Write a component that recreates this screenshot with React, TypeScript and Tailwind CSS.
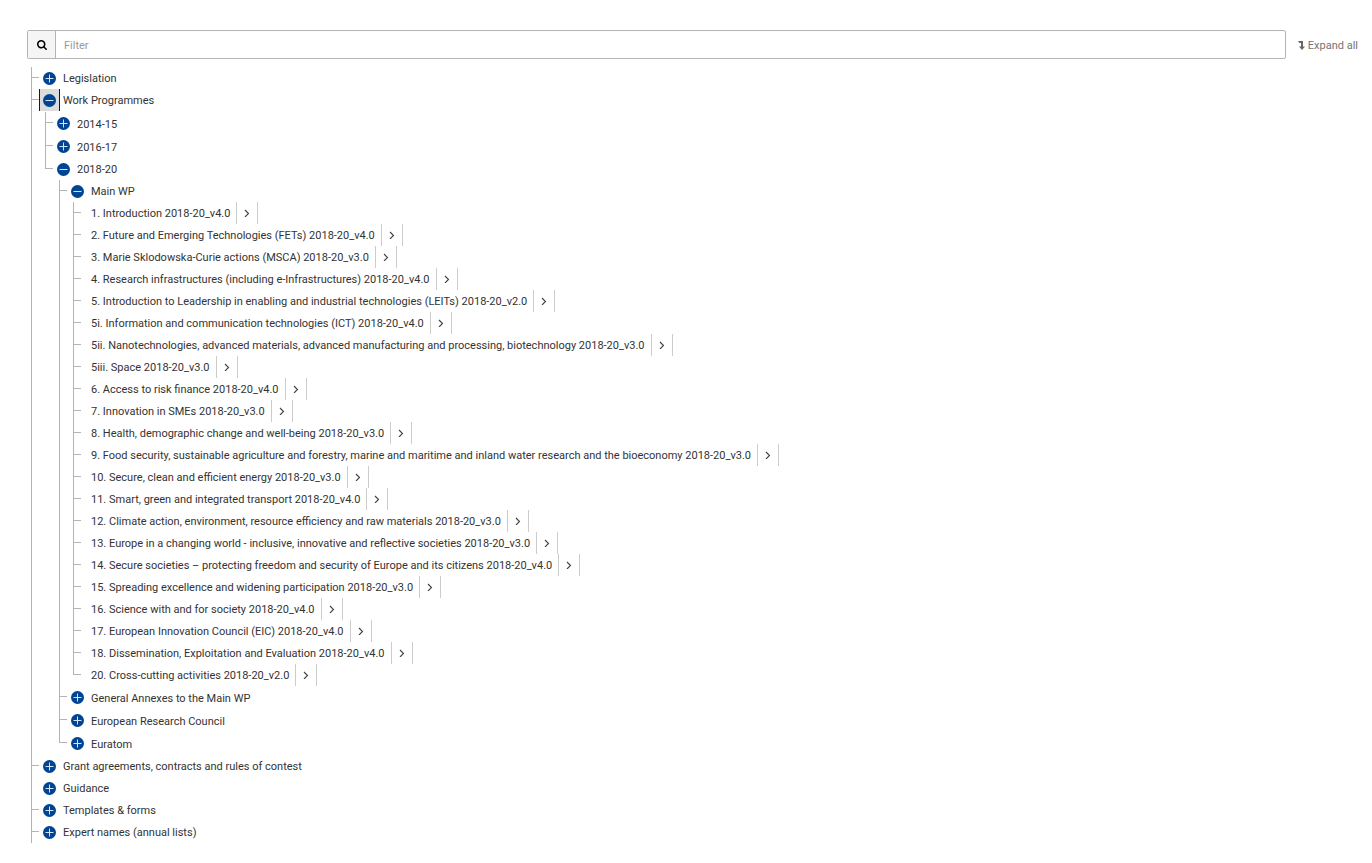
import React, { useState } from 'react';
import { clsx } from 'clsx';

interface TreeNode {
  label: string;
  children?: TreeNode[];
  leaf?: boolean;
  noTick?: boolean;
}

const mainWp = [
  '1. Introduction 2018-20_v4.0',
  '2. Future and Emerging Technologies (FETs) 2018-20_v4.0',
  '3. Marie Sklodowska-Curie actions (MSCA) 2018-20_v3.0',
  '4. Research infrastructures (including e-Infrastructures) 2018-20_v4.0',
  '5. Introduction to Leadership in enabling and industrial technologies (LEITs) 2018-20_v2.0',
  '5i. Information and communication technologies (ICT) 2018-20_v4.0',
  '5ii. Nanotechnologies, advanced materials, advanced manufacturing and processing, biotechnology 2018-20_v3.0',
  '5iii. Space 2018-20_v3.0',
  '6. Access to risk finance 2018-20_v4.0',
  '7. Innovation in SMEs 2018-20_v3.0',
  '8. Health, demographic change and well-being 2018-20_v3.0',
  '9. Food security, sustainable agriculture and forestry, marine and maritime and inland water research and the bioeconomy 2018-20_v3.0',
  '10. Secure, clean and efficient energy 2018-20_v3.0',
  '11. Smart, green and integrated transport 2018-20_v4.0',
  '12. Climate action, environment, resource efficiency and raw materials 2018-20_v3.0',
  '13. Europe in a changing world - inclusive, innovative and reflective societies 2018-20_v3.0',
  '14. Secure societies – protecting freedom and security of Europe and its citizens 2018-20_v4.0',
  '15. Spreading excellence and widening participation 2018-20_v3.0',
  '16. Science with and for society 2018-20_v4.0',
  '17. European Innovation Council (EIC) 2018-20_v4.0',
  '18. Dissemination, Exploitation and Evaluation 2018-20_v4.0',
  '20. Cross-cutting activities 2018-20_v2.0',
];

const tree: TreeNode[] = [
  { label: 'Legislation' },
  {
    label: 'Work Programmes',
    children: [
      { label: '2014-15' },
      { label: '2016-17' },
      {
        label: '2018-20',
        children: [
          { label: 'Main WP', children: mainWp.map((label) => ({ label, leaf: true })) },
          { label: 'General Annexes to the Main WP' },
          { label: 'European Research Council' },
          { label: 'Euratom' },
        ],
      },
    ],
  },
  { label: 'Grant agreements, contracts and rules of contest' },
  { label: 'Guidance', noTick: true },
  { label: 'Templates & forms' },
  { label: 'Expert names (annual lists)' },
];

const ToggleIcon: React.FC<{ open: boolean }> = ({ open }) => (
  <svg viewBox="0 0 13 13" className="size-[13px]" aria-hidden="true">
    <circle cx="6.5" cy="6.5" r="6.5" fill="#004494" />
    <path d={open ? 'M2.5 6.5h8' : 'M2.5 6.5h8M6.5 2.5v8'} stroke="#d9e3ef" strokeWidth="1" />
  </svg>
);

const LeafRow: React.FC<{ label: string }> = ({ label }) => (
  <div className="flex h-[22px] items-center pl-[18px]">
    <span className="pt-0.5 whitespace-nowrap">{label}</span>
    <button
      type="button"
      aria-label={`Open ${label}`}
      className="ml-[6px] flex h-[22px] w-[22px] shrink-0 items-center justify-center border-x border-[#ccc]"
    >
      <svg viewBox="0 0 6 8" className="h-2 w-[6px]" aria-hidden="true">
        <path d="M1 1 4.5 4.5 1 8" fill="none" stroke="#404040" strokeWidth="1.1" />
      </svg>
    </button>
  </div>
);

interface FolderRowProps {
  label: string;
  root?: boolean;
  open: boolean;
  focused: boolean;
  onToggle: () => void;
}

const FolderRow: React.FC<FolderRowProps> = ({ label, root, open, focused, onToggle }) => (
  <div className={clsx('flex items-center pl-2', root || open ? 'h-[22px]' : 'h-[23px]')}>
    <button
      type="button"
      aria-expanded={open}
      aria-label={`Toggle ${label}`}
      onClick={onToggle}
      className={clsx(
        'flex h-full w-[21px] items-center justify-center border-x',
        focused ? 'border-[#0a0a9c] bg-[#dcdcdc]' : 'border-transparent'
      )}
    >
      <ToggleIcon open={open} />
    </button>
    <span className="pt-0.5 pl-[3px] whitespace-nowrap">{label}</span>
  </div>
);

interface NodeProps {
  node: TreeNode;
  root?: boolean;
  active: string;
  setActive: (label: string) => void;
}

const Node: React.FC<NodeProps> = ({ node, root, active, setActive }) => {
  const [open, setOpen] = useState(Boolean(node.children));

  const handleToggle = () => {
    setOpen(!open);
    setActive(node.label);
  };

  return (
    <li
      className={clsx(
        'relative before:absolute before:top-0 before:left-0 before:h-[11px] before:w-2 before:border-l before:border-[#b4b4b4]',
        'after:absolute after:inset-y-0 after:left-0 after:border-l after:border-[#b4b4b4]',
        !node.noTick && 'before:border-b',
        !root && 'last:after:hidden'
      )}
    >
      {node.leaf ? (
        <LeafRow label={node.label} />
      ) : (
        <FolderRow
          label={node.label}
          root={root}
          open={open}
          focused={active === node.label}
          onToggle={handleToggle}
        />
      )}
      {open && node.children && (
        <ul className={clsx('pl-[14px]', root && 'pt-px')}>
          {node.children.map((child) => (
            <Node key={child.label} node={child} active={active} setActive={setActive} />
          ))}
        </ul>
      )}
    </li>
  );
};

export default function App() {
  const [filter, setFilter] = useState('');
  const [active, setActive] = useState('Work Programmes');

  return (
    <main className="min-h-screen bg-white pt-[30px] pr-[14px] pb-5 pl-[27px] font-[Roboto,sans-serif] text-[11px] leading-4 text-[#333]">
      <div className="flex items-center gap-3">
        <div className="flex h-[29px] flex-1 rounded-xs border border-[#b4b4b4]">
          <label htmlFor="filter" className="flex w-7 items-center justify-center border-r border-[#b4b4b4] bg-[#f5f5f5]">
            <svg viewBox="0 0 1664 1664" className="size-[10px]" aria-hidden="true">
              <path
                fill="#000"
                d="M1152 704q0-185-131.5-316.5t-316.5-131.5-316.5 131.5-131.5 316.5 131.5 316.5 316.5 131.5 316.5-131.5 131.5-316.5zm512 832q0 52-38 90t-90 38q-54 0-90-38l-343-342q-179 124-399 124-143 0-273.5-55.5t-225-150-150-225-55.5-273.5 55.5-273.5 150-225 225-150 273.5-55.5 273.5 55.5 225 150 150 225 55.5 273.5q0 220-124 399l343 343q37 37 37 90z"
              />
            </svg>
          </label>
          <input
            id="filter"
            type="text"
            aria-label="Filter"
            placeholder="Filter"
            value={filter}
            onChange={(e) => setFilter(e.target.value)}
            className="min-w-0 flex-1 px-2 pt-0.5 outline-none placeholder:text-[#999]"
          />
        </div>
        <button type="button" className="flex items-center gap-[3px] pt-0.5 whitespace-nowrap text-[#757575]">
          <svg viewBox="0 0 7 9" className="h-[9px] w-[7px]" aria-hidden="true">
            <path d="M0 0h5v5.5h2L4 9 1 5.5h2V2H1.4z" fill="#666" />
          </svg>
          Expand all
        </button>
      </div>
      <ul className="mt-2 pl-1">
        {tree.map((node) => (
          <Node key={node.label} node={node} root active={active} setActive={setActive} />
        ))}
      </ul>
    </main>
  );
}
